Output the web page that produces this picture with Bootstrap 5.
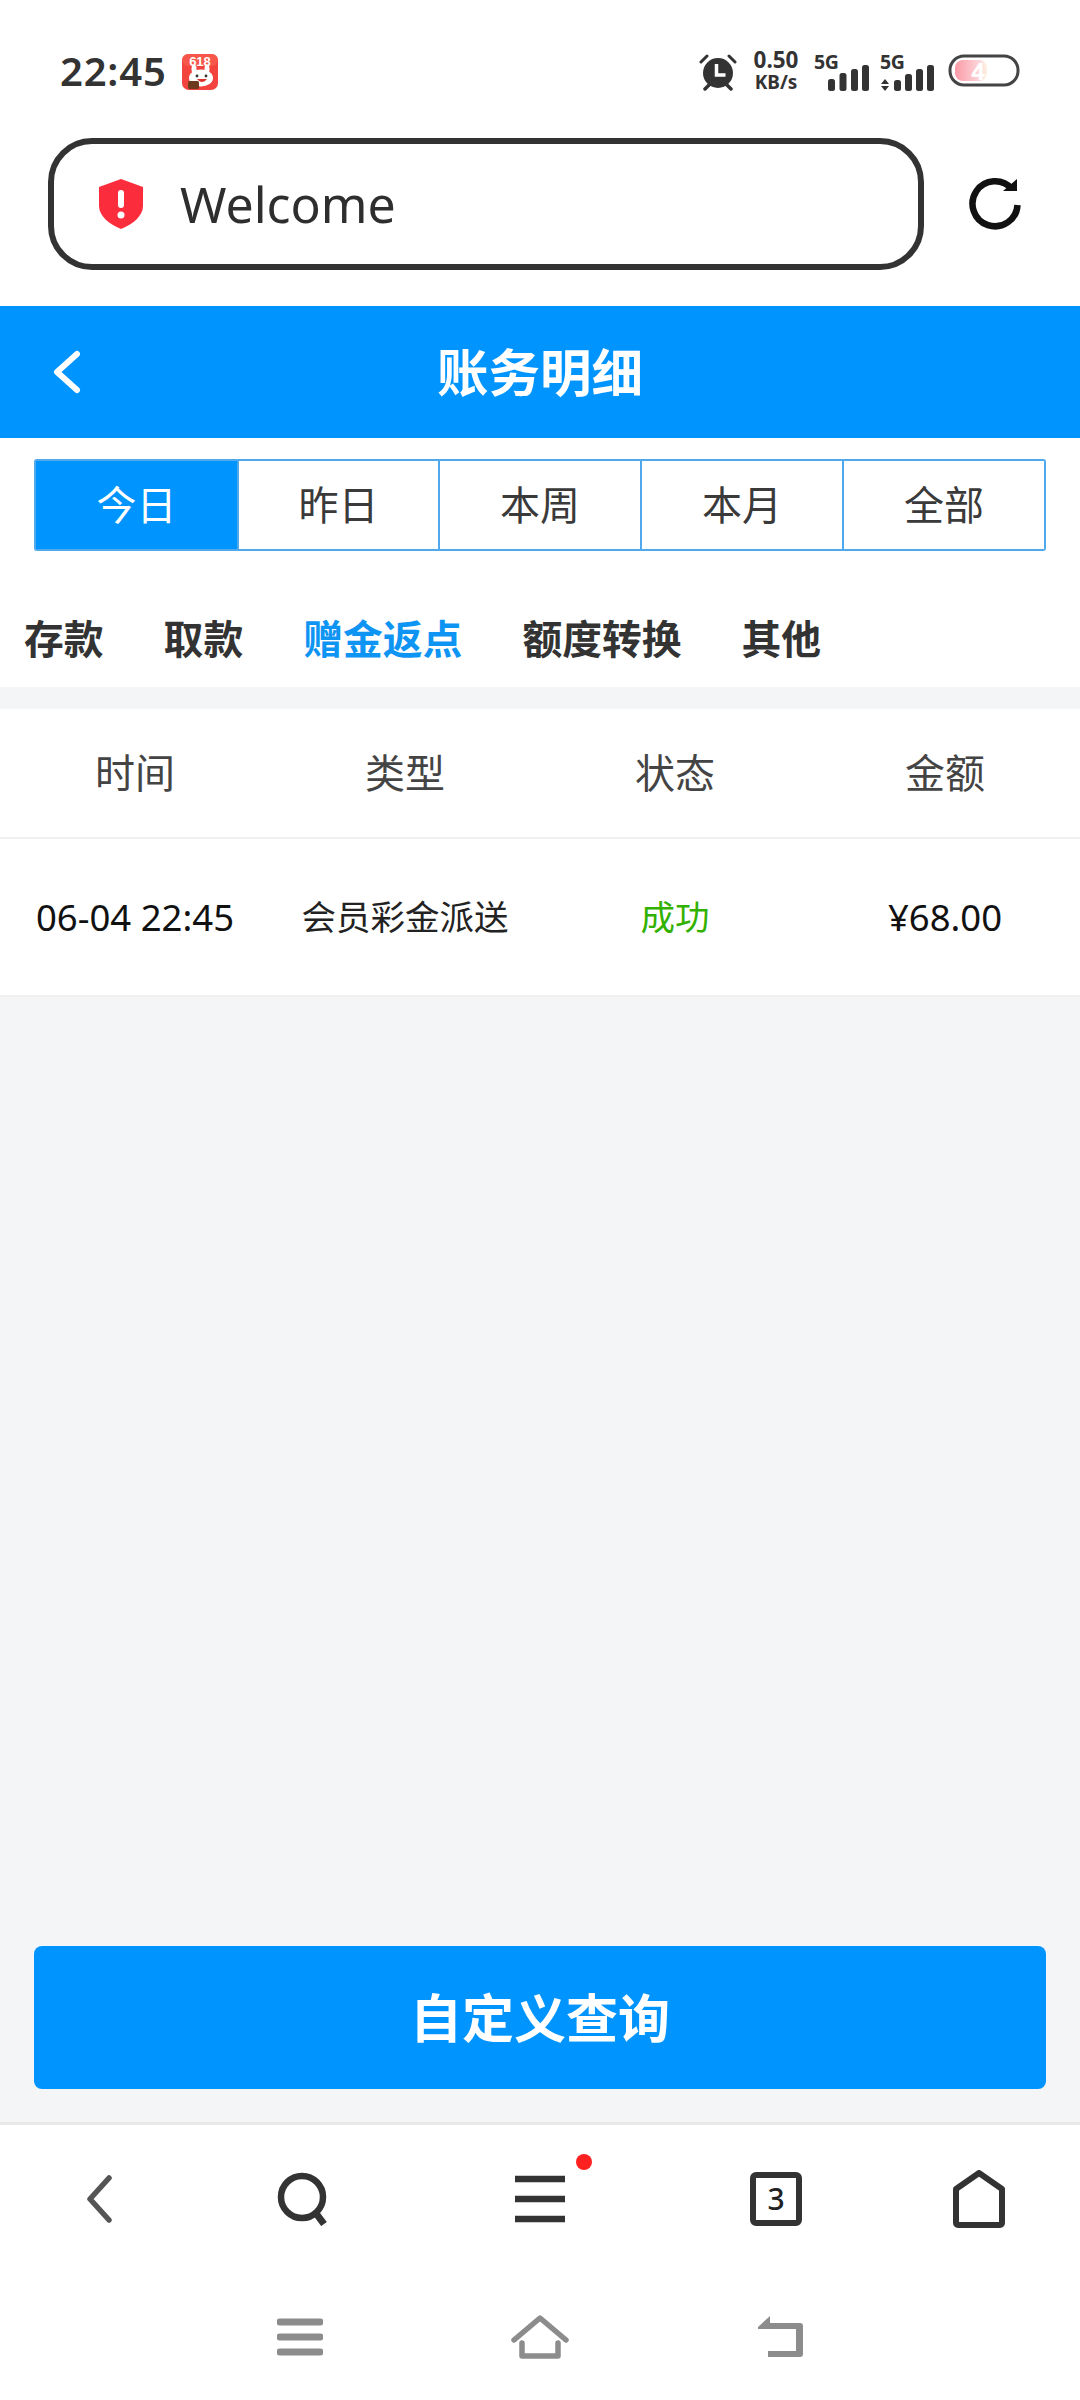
<!doctype html>
<html lang="zh">
<head>
<meta charset="utf-8">
<title>账务明细</title>
<link href="https://cdn.jsdelivr.net/npm/bootstrap@5.3.0/dist/css/bootstrap.min.css" rel="stylesheet">
<style>
html,body{margin:0;background:#fff}
body{width:1080px;height:2400px;font-family:"Noto Sans","Noto Sans CJK SC",sans-serif;color:#333}
.screen{width:1080px;height:2400px;overflow:hidden}
svg{display:block;flex:none}
.stat-bar{height:138px;padding:48px 60px 0 60px}
.stat-time{font-size:40px;font-weight:600;line-height:46px;letter-spacing:.8px;color:#333}
.stat-app{margin-left:15px;margin-top:6px}
.stat-right{margin-left:auto;height:44px}
.alarm-ic{margin-top:5px}
.speed{font-size:22.5px;line-height:24px;font-weight:700;text-align:center;width:48px;margin:0 14px 0 15px;color:#333}
.speed-sub{display:block;font-size:19px;line-height:21px;font-weight:700}
.sig-ic{margin-top:-2px}
.sig-gap{margin-left:10px}
.batt{margin-left:12px;margin-top:6px}
.url-row{height:168px;padding-left:48px;padding-bottom:36px}
.url-box{width:876px;height:132px;border:6px solid #333;border-radius:44px;padding-left:43px}
.url-text{font-size:50px;line-height:60px;color:#2e2e2e;margin-left:35px;font-weight:400}
.reload{margin-left:45px}
.title-bar{height:132px;background:#0094ff;color:#fff}
.title-back{margin-left:50px;width:34px}
.title-text{font-size:51.5px;font-weight:700;line-height:60px;margin-left:-84px;width:1080px;text-align:center}
.tabs-wrap{padding:21px 34px 0}
.range-tabs{height:92px;border:2px solid #4fa9ec;display:grid;grid-template-columns:201px 201px 202px 202px 202px;border-radius:3px}
.range-cell{display:flex;align-items:center;justify-content:center;font-size:40px;color:#3a3a3a;border-left:2px solid #4fa9ec;background:#fff}
.range-cell:first-child{border-left:0;background:#0094ff;color:#fff}
.cats{height:136px;padding:39px 24px 0;gap:60px;font-size:39.8px;font-weight:700;color:#333}
.cats .on{color:#0e94f3}
.main-area{flex:1 1 auto;background:#f4f5f7;padding-top:22px;min-height:0}
.foot-area{background:#f4f5f7}
.ledger-head,.ledger-row{display:grid;grid-template-columns:repeat(4,270px);background:#fff;text-align:center;align-items:center}
.ledger-head{height:130px;font-size:40px;color:#444;border-bottom:2px solid #f0f0f0}
.ledger-row{height:158px;font-size:34.500px;color:#222;border-bottom:2px solid #f0f0f0}
.row-date,.row-amt{font-size:36.500px;color:#111}
.row-type{color:#222}
.row-ok{color:#33b100}
.query-btn{width:1012px;height:143px;margin:0 34px 33px;background:#0094ff;color:#fff;font-size:52px;font-weight:700;border:0;border-radius:8px;padding:0}
.query-btn:hover,.query-btn:active{background:#0094ff;color:#fff}
.tool-bar{height:148px;background:#fff;border-top:3px solid #e8e8e8;display:grid;grid-template-columns:198px 210px 264px 208px 198px;align-items:center;justify-items:center;padding-top:2px}
.menu-holder{position:relative}
.menu-dot{position:absolute;left:62px;top:-21px;width:16px;height:16px;border-radius:50%;background:#ff2020}
.sys-bar{height:130px;background:#fff;padding-top:4px}
.sys-cell{width:240px;display:flex;justify-content:center}
</style>
</head>
<body>
<div class="screen d-flex flex-column">
  <div class="stat-bar d-flex align-items-start">
    <span class="stat-time">22:45</span>
    <svg class="stat-app" width="36" height="36" viewBox="0 0 36 36"><rect width="36" height="36" rx="7" fill="#f2433f"/><rect x="0" y="0" width="36" height="12" rx="6" fill="#f7574a"/><ellipse cx="12" cy="15" rx="2.500" ry="4.500" fill="#fff"/><ellipse cx="25" cy="15" rx="2.500" ry="4.500" fill="#fff"/><text x="18" y="12" text-anchor="middle" font-size="13" font-weight="700" fill="#fff" font-family="Liberation Sans, sans-serif">618</text><ellipse cx="19" cy="24" rx="12" ry="8.500" fill="#fff"/><path d="M15 25c3 4 7 4 10 0z" fill="#d9322c"/><circle cx="15" cy="22" r="1.400" fill="#333"/><circle cx="24" cy="22" r="1.400" fill="#333"/><rect x="6" y="27" width="11" height="8" rx="1.500" fill="#6e3a1e"/></svg>
    <div class="stat-right d-flex align-items-start">
      <svg class="alarm-ic" width="38" height="38" viewBox="0 0 38 38"><circle cx="19" cy="20" r="15" fill="#333"/><path d="M17.500 11v11h9" fill="none" stroke="#fff" stroke-width="3.500"/><path d="M2 9l6-6M36 9l-6-6" stroke="#333" stroke-width="3" stroke-linecap="round"/><path d="M6 36l4-4M32 36l-4-4" stroke="#333" stroke-width="3.500" stroke-linecap="round"/></svg>
      <div class="speed">0.50<span class="speed-sub">KB/s</span></div>
      <svg class="sig-ic" width="56" height="46" viewBox="0 -8 56 46"><text x="0" y="15" font-size="19.500" font-weight="700" fill="#333" font-family="Noto Sans, sans-serif" letter-spacing="-.5">5G</text><rect x="14" y="25" width="7" height="12" rx="2.500" fill="#333"/><rect x="25.500" y="19" width="7" height="18" rx="2.500" fill="#333"/><rect x="37" y="15" width="7" height="22" rx="2.500" fill="#333"/><rect x="48" y="11" width="7" height="26" rx="2.500" fill="#333"/></svg>
      <svg class="sig-ic sig-gap" width="56" height="46" viewBox="0 -8 56 46"><text x="0" y="15" font-size="19.500" font-weight="700" fill="#333" font-family="Noto Sans, sans-serif" letter-spacing="-.5">5G</text><path d="M1 30l4-5 4 5zM1 32h8l-4 5z" fill="#333"/><rect x="14" y="26" width="7" height="11" rx="2.500" fill="#333"/><rect x="25" y="20" width="7" height="17" rx="2.500" fill="#333"/><rect x="36" y="15" width="7" height="22" rx="2.500" fill="#333"/><rect x="47" y="11" width="7" height="26" rx="2.500" fill="#333"/></svg>
      <svg class="batt" width="72" height="34" viewBox="0 0 72 34"><defs><linearGradient id="bt" x1="0" x2="1"><stop offset="0" stop-color="#fb9aa6"/><stop offset=".8" stop-color="#fbd9dc"/><stop offset="1" stop-color="#fff3e0"/></linearGradient></defs><rect x="7" y="6" width="32" height="21" rx="8" fill="url(#bt)"/><rect x="2" y="2" width="68" height="29" rx="14" fill="none" stroke="#444" stroke-width="3"/><text x="30" y="26" font-size="24" font-weight="700" text-anchor="middle" fill="#fff" font-family="Noto Sans, sans-serif">4</text></svg>
    </div>
  </div>

  <div class="url-row d-flex align-items-center">
    <div class="url-box d-flex align-items-center">
      <svg width="48" height="50" viewBox="0 0 48 50"><path d="M24 0l22 8v19c0 10-10 18-22 23C12 45 2 37 2 27V8z" fill="#fb2d3d"/><rect x="21" y="11" width="6" height="18" rx="3" fill="#fff"/><circle cx="24" cy="36" r="3.500" fill="#fff"/></svg>
      <span class="url-text">Welcome</span>
    </div>
    <svg class="reload" width="52" height="54" viewBox="0 0 52 54"><path d="M43 12A22.500 22.500 0 1 0 48.500 28" fill="none" stroke="#111" stroke-width="6.500"/><path d="M34 14h14V2z" fill="#111"/></svg>
  </div>

  <div class="title-bar d-flex align-items-center">
    <svg class="title-back" width="34" height="44" viewBox="0 0 34 44"><path d="M27 4L7 22l20 18" fill="none" stroke="#fff" stroke-width="6" stroke-linecap="round" stroke-linejoin="round"/></svg>
    <div class="title-text">账务明细</div>
  </div>

  <div class="tabs-wrap">
    <div class="range-tabs">
      <div class="range-cell">今日</div><div class="range-cell">昨日</div><div class="range-cell">本周</div><div class="range-cell">本月</div><div class="range-cell">全部</div>
    </div>
  </div>

  <div class="cats d-flex align-items-center">
    <span>存款</span><span>取款</span><span class="on">赠金返点</span><span>额度转换</span><span>其他</span>
  </div>

  <div class="main-area">
    <div class="ledger-head"><div>时间</div><div>类型</div><div>状态</div><div>金额</div></div>
    <div class="ledger-row"><div class="row-date">06-04 22:45</div><div class="row-type">会员彩金派送</div><div class="row-ok">成功</div><div class="row-amt">¥68.00</div></div>
  </div>
  <div class="foot-area"><button class="btn query-btn d-block" type="button">自定义查询</button></div>

  <div class="tool-bar">
    <svg width="30" height="48" viewBox="0 0 30 48"><path d="M25 3L6 24l19 21" fill="none" stroke="#555" stroke-width="5.500" stroke-linejoin="round" stroke-linecap="round"/></svg>
    <svg width="52" height="54" viewBox="0 0 52 54"><circle cx="25" cy="25" r="21" fill="none" stroke="#333" stroke-width="6.500"/><path d="M38 40l9 12" stroke="#333" stroke-width="7"/></svg>
    <div class="menu-holder"><svg width="52" height="48" viewBox="0 0 52 48"><path d="M1 4h50M1 24h50M1 44h50" stroke="#333" stroke-width="6.500"/></svg><span class="menu-dot"></span></div>
    <svg width="52" height="54" viewBox="0 0 52 54"><rect x="3" y="3" width="46" height="48" rx="3" fill="none" stroke="#333" stroke-width="6"/><text x="26" y="38" text-anchor="middle" font-size="30" font-weight="500" fill="#222" font-family="Noto Sans, sans-serif">3</text></svg>
    <svg width="52" height="58" viewBox="0 0 52 58"><path d="M3 19L26 3l23 16v34a2 2 0 0 1-2 2H5a2 2 0 0 1-2-2z" fill="none" stroke="#333" stroke-width="6" stroke-linejoin="round"/></svg>
  </div>

  <div class="sys-bar d-flex justify-content-center align-items-center">
    <div class="sys-cell"><svg width="46" height="38" viewBox="0 0 46 38"><path d="M3 4h40M3 19h40M3 34h40" stroke="#8c8c8c" stroke-width="7" stroke-linecap="round"/></svg></div>
    <div class="sys-cell"><svg width="58" height="44" viewBox="0 0 58 44"><path d="M3 25L29 3l26 22" fill="none" stroke="#8c8c8c" stroke-width="5.500" stroke-linecap="round" stroke-linejoin="round"/><path d="M11 28v13h36V28" fill="none" stroke="#8c8c8c" stroke-width="5.500" stroke-linecap="round" stroke-linejoin="round"/></svg></div>
    <div class="sys-cell"><svg width="48" height="44" viewBox="0 0 48 44"><path d="M2 12L14 1v7h30a3 3 0 0 1 3 3v28a3 3 0 0 1-3 3H12v-6h28V14H2z" fill="#8c8c8c"/></svg></div>
  </div>
</div>
<script src="https://cdn.jsdelivr.net/npm/bootstrap@5.3.0/dist/js/bootstrap.bundle.min.js"></script>
</body>
</html>
